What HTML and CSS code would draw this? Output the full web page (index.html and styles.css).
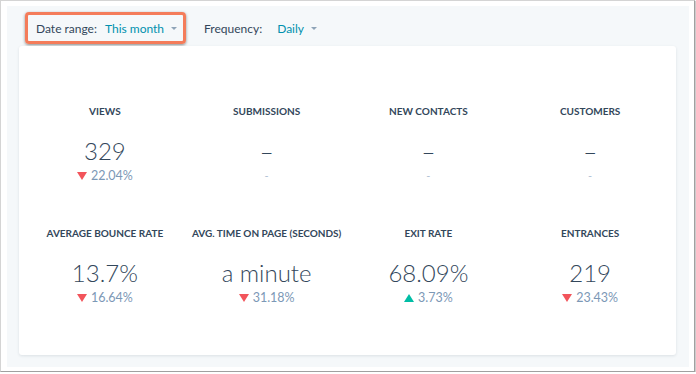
FILE: index.html
```html
<!DOCTYPE html>
<html lang="en">
<head>
    <meta charset="UTF-8">
    <meta name="viewport" content="width=device-width, initial-scale=1.0">
    <title>Page performance</title>
    <link rel="stylesheet" href="styles.css">
</head>
<body>

<div class="window">
    <div class="panel">

        <!-- Filters -->
        <div class="filters">
            <div class="filter highlighted">
                <span class="filter-label">Date range:</span>
                <span class="filter-value">This month</span>
                <span class="caret"></span>
            </div>
            <div class="filter">
                <span class="filter-label wide">Frequency:</span>
                <span class="filter-value">Daily</span>
                <span class="caret"></span>
            </div>
        </div>

        <!-- Metrics -->
        <div class="card">
            <div class="metrics">
                <div class="metric">
                    <div class="metric-label">Views</div>
                    <div class="metric-value">329</div>
                    <div class="metric-change down">22.04%</div>
                </div>
                <div class="metric">
                    <div class="metric-label">Submissions</div>
                    <div class="metric-value">&ndash;</div>
                    <div class="metric-change empty">-</div>
                </div>
                <div class="metric">
                    <div class="metric-label">New contacts</div>
                    <div class="metric-value">&ndash;</div>
                    <div class="metric-change empty">-</div>
                </div>
                <div class="metric">
                    <div class="metric-label">Customers</div>
                    <div class="metric-value">&ndash;</div>
                    <div class="metric-change empty">-</div>
                </div>

                <div class="metric">
                    <div class="metric-label">Average bounce rate</div>
                    <div class="metric-value">13.7%</div>
                    <div class="metric-change down">16.64%</div>
                </div>
                <div class="metric">
                    <div class="metric-label">Avg. time on page (seconds)</div>
                    <div class="metric-value">a minute</div>
                    <div class="metric-change down">31.18%</div>
                </div>
                <div class="metric">
                    <div class="metric-label">Exit rate</div>
                    <div class="metric-value">68.09%</div>
                    <div class="metric-change up">3.73%</div>
                </div>
                <div class="metric">
                    <div class="metric-label">Entrances</div>
                    <div class="metric-value">219</div>
                    <div class="metric-change down">23.43%</div>
                </div>
            </div>
        </div>

    </div>
</div>

</body>
</html>
```

FILE: styles.css
```css
* {
    margin: 0;
    padding: 0;
    box-sizing: border-box;
}

body {
    font-family: Lato, 'Open Sans', sans-serif;
    background: #fff;
    color: #33475b;
}

.window {
    width: 695px;
    height: 372px;
    padding: 5px 5px 4px 6px;
    border: 1px solid #d4d4d4;
    border-right-color: #a0a0a0;
    border-bottom-color: #a0a0a0;
    box-shadow: 1px 1px 1px rgba(0, 0, 0, 0.2);
    background: #fff;
}

.panel {
    height: 100%;
    background: #f5f8fa;
    padding: 0 13px 12px 12px;
    display: flex;
    flex-direction: column;
}

/* Filters */

.filters {
    height: 40px;
    padding: 6px 6px 0;
    display: flex;
    align-items: flex-start;
    gap: 18px;
}

.filter {
    height: 32px;
    padding-top: 1px;
    display: flex;
    align-items: center;
    font-size: 12px;
    white-space: nowrap;
}

.filter.highlighted {
    padding: 1px 6px 0 8px;
    border: 3px solid #f47c5a;
    border-radius: 4px;
    box-shadow: 0 1px 3px rgba(0, 0, 0, 0.45);
}

.filter-label {
    margin-right: 8px;
}

.filter-label.wide {
    margin-right: 15px;
}

.filter-value {
    color: #0091ae;
}

.caret {
    width: 0;
    height: 0;
    margin-left: 7px;
    border-left: 3px solid transparent;
    border-right: 3px solid transparent;
    border-top: 3px solid #8fa4b8;
}

/* Metrics card */

.card {
    flex: 1;
    background: #fff;
    border-radius: 3px;
    box-shadow: 0 1px 3px rgba(45, 62, 80, 0.12);
    padding: 58px 5px 0;
}

.metrics {
    display: grid;
    grid-template-columns: repeat(4, 1fr);
    row-gap: 42px;
}

.metric {
    text-align: center;
}

.metric-label {
    font-size: 10px;
    line-height: 14px;
    font-weight: 700;
    text-transform: uppercase;
}

.metric-value {
    margin-top: 18px;
    font-size: 24px;
    line-height: 30px;
    font-weight: 300;
}

.metric-change {
    margin-top: 2px;
    font-size: 12.5px;
    line-height: 16px;
    color: #7c98b6;
    display: flex;
    justify-content: center;
    align-items: center;
}

.metric-change.down::before,
.metric-change.up::before {
    content: '';
    width: 0;
    height: 0;
    margin-right: 4px;
    border-left: 5px solid transparent;
    border-right: 5px solid transparent;
}

.metric-change.down::before {
    border-top: 8px solid #f2545b;
}

.metric-change.up::before {
    border-bottom: 8px solid #00bda5;
}

.metric-change.empty {
    color: #b0c1d4;
    font-size: 11px;
}
```
